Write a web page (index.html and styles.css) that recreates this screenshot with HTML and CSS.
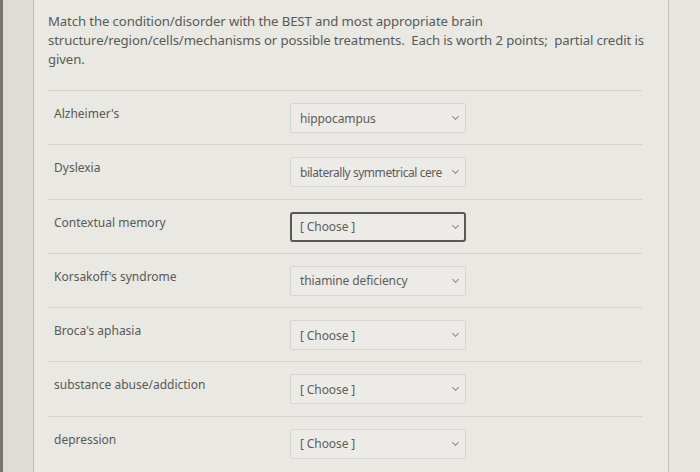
FILE: index.html
```html
<!DOCTYPE html>
<html lang="en">
<head>
<meta charset="utf-8">
<title>Matching question</title>
<link rel="stylesheet" href="styles.css">
</head>
<body>
<div class="page">
  <div class="edge"></div>
  <div class="gutter"></div>
  <main class="content">
    <p class="question">Match the condition/disorder with the BEST and most appropriate brain<br>structure/region/cells/mechanisms or possible treatments.&nbsp; Each is worth 2 points;&nbsp; partial credit is<br>given.</p>
    <div class="rows">
      <div class="row">
        <div class="label">Alzheimer's</div>
        <div class="select"><span class="val">hippocampus</span><span class="chev"></span></div>
      </div>
      <div class="row">
        <div class="label">Dyslexia</div>
        <div class="select"><span class="val tight">bilaterally symmetrical cere</span><span class="chev"></span></div>
      </div>
      <div class="row">
        <div class="label">Contextual memory</div>
        <div class="select focus"><span class="val">[ Choose ]</span><span class="chev"></span></div>
      </div>
      <div class="row">
        <div class="label">Korsakoff's syndrome</div>
        <div class="select"><span class="val">thiamine deficiency</span><span class="chev"></span></div>
      </div>
      <div class="row">
        <div class="label">Broca's aphasia</div>
        <div class="select"><span class="val">[ Choose ]</span><span class="chev"></span></div>
      </div>
      <div class="row">
        <div class="label">substance abuse/addiction</div>
        <div class="select"><span class="val">[ Choose ]</span><span class="chev"></span></div>
      </div>
      <div class="row">
        <div class="label">depression</div>
        <div class="select"><span class="val">[ Choose ]</span><span class="chev"></span></div>
      </div>
    </div>
  </main>
  <div class="rightpad"></div>
</div>
</body>
</html>
```
FILE: styles.css
```css
html, body {
  margin: 0;
  padding: 0;
}
body {
  width: 700px;
  height: 472px;
  overflow: hidden;
  background: #e7e6e1;
  font-family: "Noto Sans", "Open Sans", sans-serif;
  color: #5b5b58;
}
.page {
  display: flex;
  height: 472px;
}
.edge {
  width: 3px;
  background: #77756f;
}
.gutter {
  width: 30px;
  background: #dedcd7;
  border-right: 1px solid #bdbbb5;
}
.content {
  width: 635px;
  border-right: 1px solid #c2c0ba;
  background: #e9e8e3;
  padding: 0 8px 0 14px;
  box-sizing: border-box;
}
.rightpad {
  flex: 1;
  background: #e6e5e0;
}
.question {
  margin: 0;
  padding-top: 12px;
  font-size: 13.2px;
  line-height: 19px;
  color: #5a5a57;
  letter-spacing: -0.12px;
  white-space: nowrap;
}
.rows {
  margin-top: 21px;
  margin-right: 18px;
}
.row {
  display: flex;
  align-items: flex-start;
  height: 54.3px;
  border-top: 1px solid #d3d2cc;
  box-sizing: border-box;
}
.label {
  width: 242px;
  padding: 15px 0 0 6px;
  box-sizing: border-box;
  font-size: 12px;
  line-height: 16px;
  color: #595956;
}
.select {
  margin-top: 12px;
  width: 176px;
  height: 30px;
  border: 1px solid #d6d5d0;
  border-radius: 2px;
  background: #ecebe7;
  box-sizing: border-box;
  display: flex;
  align-items: center;
  padding: 0 7px 0 9px;
  font-size: 12px;
  color: #5d5d5a;
}
.select.focus {
  border: 2px solid #5a5955;
  border-radius: 3px;
  padding-left: 8px;
  padding-right: 6px;
}
.val {
  flex: 1;
  min-width: 0;
  white-space: nowrap;
  overflow: hidden;
  margin-right: 8px;
  letter-spacing: -0.1px;
}
.val.tight {
  letter-spacing: -0.45px;
}
.chev {
  flex-shrink: 0;
  width: 4px;
  height: 4px;
  border-right: 1.3px solid #8a8986;
  border-bottom: 1.3px solid #8a8986;
  transform: rotate(45deg);
  margin-top: -3px;
}
```
